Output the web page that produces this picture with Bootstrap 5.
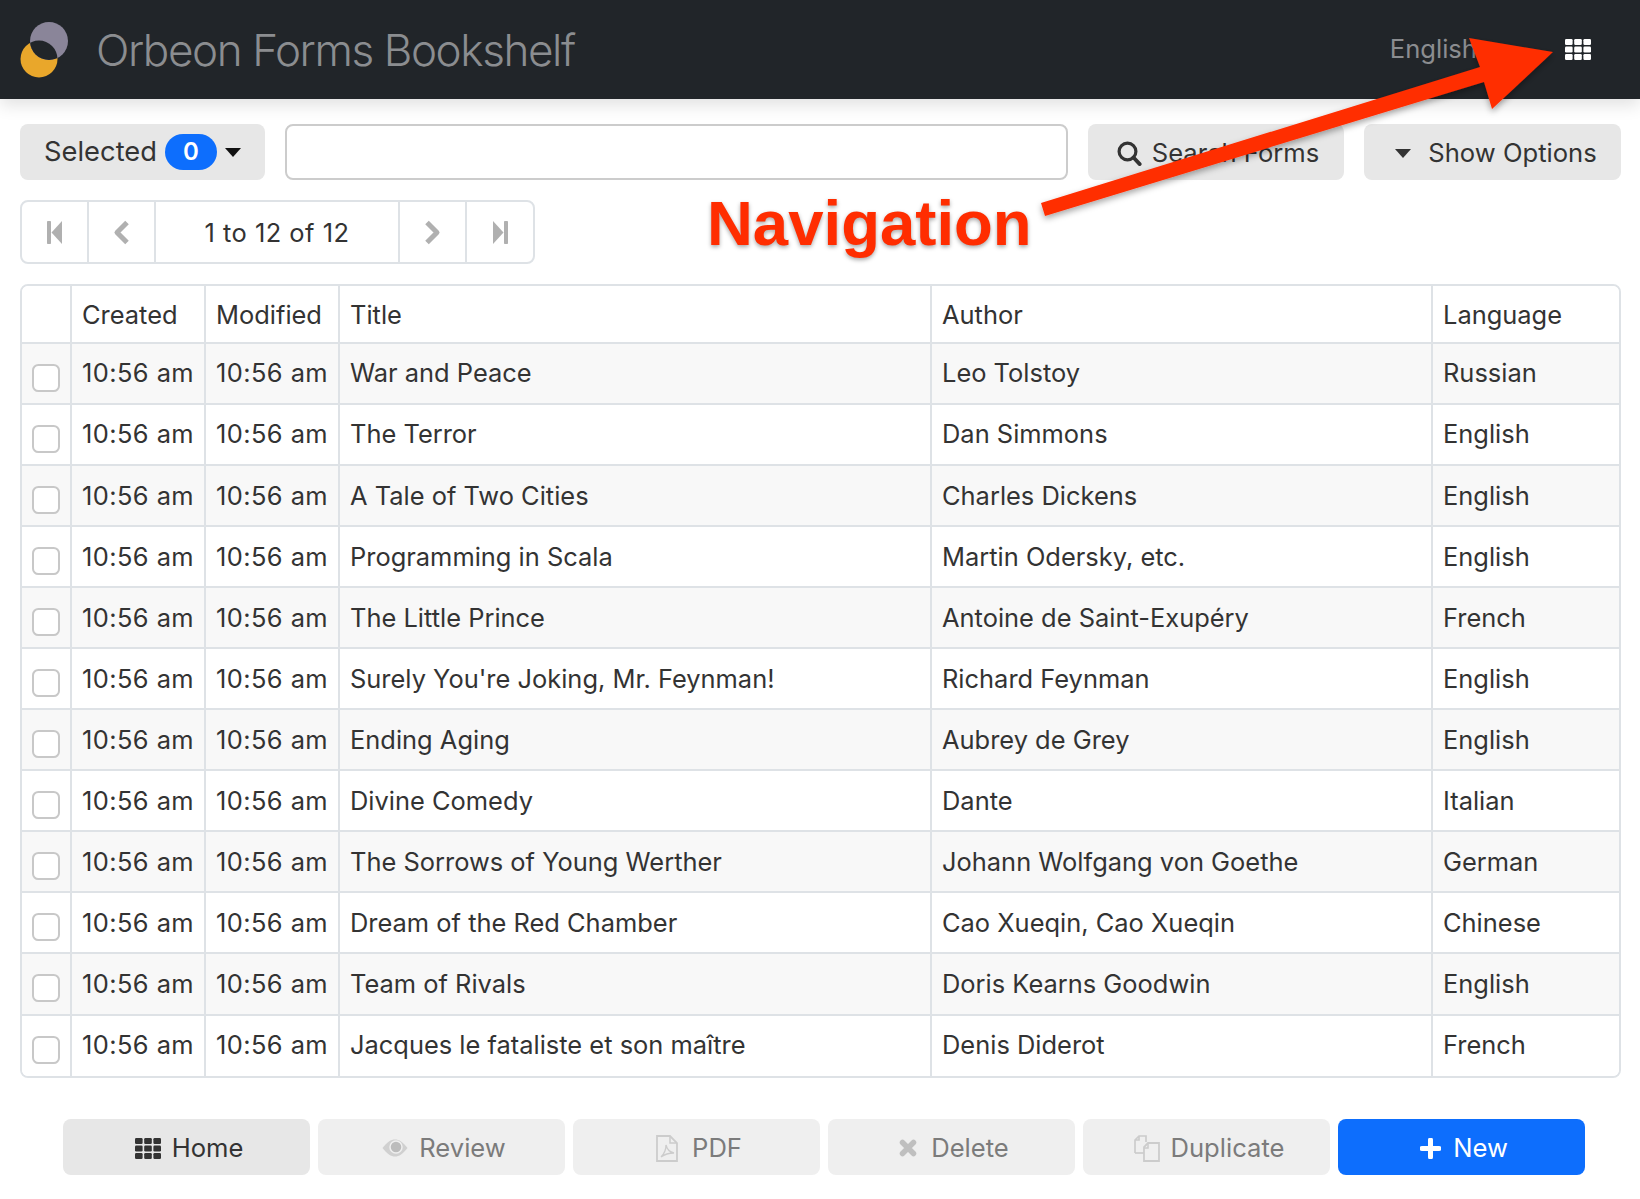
<!DOCTYPE html>
<html lang="en">
<head>
<meta charset="utf-8">
<title>Orbeon Forms Bookshelf</title>
<link href="https://cdn.jsdelivr.net/npm/bootstrap@5.3.0/dist/css/bootstrap.min.css" rel="stylesheet">
<style>
html,body{height:100%;overflow:hidden}
body{font-family:Inter,"Liberation Sans",sans-serif;font-size:25.45px;color:#333;background:#fff;position:relative}
.top-bar{height:99px;padding:0 20px;box-shadow:0 6px 16px rgba(0,0,0,.12)}
.top-logo{width:50px;height:56px;flex:none}
.top-title{font-size:44px;font-weight:300;color:#8b8d90;letter-spacing:-1.4px;margin-left:26px;line-height:1}
.top-lang{font-size:25.6px;color:#8b8d90;font-weight:400}
.top-grid{margin-left:88px;margin-right:29px;display:block}
.page-body{padding:25px 19px 0 20px}
.bar-btn{height:56px;font-size:25.6px;background:#e7e7e7;border:0;color:#333;border-radius:8px;padding:0;display:flex;align-items:center;justify-content:center;flex:none}
.bar-btn:hover{background:#e7e7e7;color:#333}
.sel-btn{width:245px;gap:8px;font-size:27.3px;padding-top:1px}
.sel-count{background:#0d6efd;color:#fff;font-size:24px;font-weight:600;width:52px;height:36px;line-height:36px;padding:0;border-radius:18px;display:inline-block;text-align:center}
.caret-ic{display:block}
.search-box{flex:1;height:56px;border:2px solid #ccc;border-radius:8px;margin:0 20px}
.srch-btn{width:256px;gap:10px;padding:3px 0 0 4px}
.opt-btn{width:257px;gap:17px;margin-left:20px;padding:3px 0 0 7px}
.pager-wrap{margin:20px 0 20px;width:515px;height:64px;border:2px solid #dee2e6;border-radius:8px;display:flex;align-items:stretch;background:#fff}
.pager-cell{display:flex;align-items:center;justify-content:center;width:67px;border-right:2px solid #dee2e6;flex:none}
.pager-text{width:244px;color:#333;font-size:25.45px;padding-top:2px;letter-spacing:.48px}
.pager-cell:last-child{border-right:0;flex:1}
.book-frame{border:2px solid #dee2e6;border-radius:8px;overflow:hidden;width:1601px}
.book-table{table-layout:fixed;width:1597px;border-collapse:separate;border-spacing:0;margin:0;font-size:25.45px}
.book-table.table>:not(caption)>*>*{border-width:0 2px 2px 0;border-style:solid;border-color:#dee2e6;padding:0 10px;vertical-align:middle;color:#333;box-shadow:none;font-weight:400;white-space:nowrap;overflow:hidden;background:#fff}
.book-table.table>thead>tr>*{height:58px;padding-top:2px}
.book-table.table>tbody>tr>*{height:61.05px}
.book-table.table>tbody>tr:nth-child(odd)>*{background:#f8f8f8}
.book-table.table>:not(caption)>*>*:last-child{border-right:0}
.book-table.table>tbody>tr:last-child>*{border-bottom:0;height:60px}
.book-table tbody td:nth-child(2),.book-table tbody td:nth-child(3){letter-spacing:.42px}
.c-check{width:50px}.c-time{width:134px}.c-title{width:592px}.c-author{width:501px}
.row-check{width:28px;height:28px;margin:9px 0 0 0;border:2px solid #c8c8c8;border-radius:6px;display:block}
.foot-row{padding:41px 36px 0 43px;gap:8px;justify-content:flex-start}
.foot-btn{width:247px;gap:11px;padding:3px 0 0 5px}
.foot-wide{gap:14px}
.foot-off{background:#efefef;color:#7b7b7b}
.foot-off:hover{background:#efefef;color:#7b7b7b}
.foot-new{background:#0d6efd;color:#fff;gap:12px}
.foot-new:hover{background:#0d6efd;color:#fff}
.note-arrow{position:absolute;left:0;top:0;pointer-events:none}
.note-label{position:absolute;left:707px;top:187px;font-family:"Liberation Sans",Arial,sans-serif;font-weight:700;font-size:63.5px;line-height:72px;color:#ff2d00;text-shadow:0 2px 4px rgba(0,0,0,.35);white-space:nowrap}
</style>
</head>
<body>
<nav class="navbar navbar-dark bg-dark top-bar d-flex align-items-center flex-nowrap">
  <div class="d-flex align-items-center">
    <svg class="top-logo" viewBox="0 0 50 56" aria-hidden="true">
      <defs><clipPath id="lens"><circle cx="29" cy="19" r="19"/></clipPath></defs>
      <circle cx="19" cy="37" r="18.5" fill="#e9a72b"/>
      <circle cx="29" cy="19" r="19" fill="#8a8599"/>
      <circle cx="19" cy="37" r="18.5" fill="#212529" clip-path="url(#lens)"/>
    </svg>
    <span class="top-title">Orbeon Forms Bookshelf</span>
  </div>
  <div class="d-flex align-items-center">
    <span class="top-lang">English</span>
    <svg class="top-grid" width="26" height="21" viewBox="0 0 26 21" fill="#fff" aria-hidden="true">
      <rect x="0" y="0" width="7.6" height="6" rx="1.2"/><rect x="9.2" y="0" width="7.6" height="6" rx="1.2"/><rect x="18.4" y="0" width="7.6" height="6" rx="1.2"/>
      <rect x="0" y="7.5" width="7.6" height="6" rx="1.2"/><rect x="9.2" y="7.5" width="7.6" height="6" rx="1.2"/><rect x="18.4" y="7.5" width="7.6" height="6" rx="1.2"/>
      <rect x="0" y="15" width="7.6" height="6" rx="1.2"/><rect x="9.2" y="15" width="7.6" height="6" rx="1.2"/><rect x="18.4" y="15" width="7.6" height="6" rx="1.2"/>
    </svg>
  </div>
</nav>

<div class="page-body">
  <div class="d-flex align-items-center">
    <button type="button" class="btn bar-btn sel-btn">Selected <span class="badge sel-count">0</span>
      <svg class="caret-ic" width="16" height="9" viewBox="0 0 16 9" aria-hidden="true"><path d="M0 0h16L8 9z" fill="#111"/></svg>
    </button>
    <input type="text" class="form-control search-box" aria-label="Search">
    <button type="button" class="btn bar-btn srch-btn">
      <svg width="25" height="25" viewBox="0 0 25 25" aria-hidden="true"><circle cx="10.5" cy="10.5" r="8.4" fill="none" stroke="#333" stroke-width="3.2"/><path d="M16.5 16.5l6.2 6.6" stroke="#333" stroke-width="3.8" stroke-linecap="round"/></svg>
      Search Forms</button>
    <button type="button" class="btn bar-btn opt-btn">
      <svg width="16" height="9" viewBox="0 0 16 9" aria-hidden="true"><path d="M0 0h16L8 9z" fill="#333"/></svg>
      Show Options</button>
  </div>

  <div class="pager-wrap">
    <div class="pager-cell"><svg width="16" height="23" viewBox="0 0 16 23" fill="#b0b0b0" aria-hidden="true"><rect x="0" y="0" width="4" height="23" rx=".8"/><path d="M15 0v23L4.5 11.5z"/></svg></div>
    <div class="pager-cell"><svg width="17" height="25" viewBox="0 0 17 25" aria-hidden="true"><path d="M14 2.5L4 12.5l10 10" fill="none" stroke="#b0b0b0" stroke-width="5" stroke-linejoin="round"/></svg></div>
    <div class="pager-cell pager-text">1 to 12 of 12</div>
    <div class="pager-cell"><svg width="17" height="25" viewBox="0 0 17 25" aria-hidden="true"><path d="M3 2.5l10 10-10 10" fill="none" stroke="#b0b0b0" stroke-width="5" stroke-linejoin="round"/></svg></div>
    <div class="pager-cell"><svg width="16" height="23" viewBox="0 0 16 23" fill="#b0b0b0" aria-hidden="true"><rect x="12" y="0" width="4" height="23" rx=".8"/><path d="M1 0v23l10.5-11.5z"/></svg></div>
  </div>

  <div class="book-frame">
    <table class="table book-table">
      <thead><tr><th class="c-check"></th><th class="c-time">Created</th><th class="c-time">Modified</th><th class="c-title">Title</th><th class="c-author">Author</th><th>Language</th></tr></thead>
      <tbody>
        <tr><td><input class="form-check-input row-check" type="checkbox" aria-label="Select"></td><td>10:56 am</td><td>10:56 am</td><td>War and Peace</td><td>Leo Tolstoy</td><td>Russian</td></tr>
        <tr><td><input class="form-check-input row-check" type="checkbox" aria-label="Select"></td><td>10:56 am</td><td>10:56 am</td><td>The Terror</td><td>Dan Simmons</td><td>English</td></tr>
        <tr><td><input class="form-check-input row-check" type="checkbox" aria-label="Select"></td><td>10:56 am</td><td>10:56 am</td><td>A Tale of Two Cities</td><td>Charles Dickens</td><td>English</td></tr>
        <tr><td><input class="form-check-input row-check" type="checkbox" aria-label="Select"></td><td>10:56 am</td><td>10:56 am</td><td>Programming in Scala</td><td>Martin Odersky, etc.</td><td>English</td></tr>
        <tr><td><input class="form-check-input row-check" type="checkbox" aria-label="Select"></td><td>10:56 am</td><td>10:56 am</td><td>The Little Prince</td><td>Antoine de Saint-Exupéry</td><td>French</td></tr>
        <tr><td><input class="form-check-input row-check" type="checkbox" aria-label="Select"></td><td>10:56 am</td><td>10:56 am</td><td>Surely You're Joking, Mr. Feynman!</td><td>Richard Feynman</td><td>English</td></tr>
        <tr><td><input class="form-check-input row-check" type="checkbox" aria-label="Select"></td><td>10:56 am</td><td>10:56 am</td><td>Ending Aging</td><td>Aubrey de Grey</td><td>English</td></tr>
        <tr><td><input class="form-check-input row-check" type="checkbox" aria-label="Select"></td><td>10:56 am</td><td>10:56 am</td><td>Divine Comedy</td><td>Dante</td><td>Italian</td></tr>
        <tr><td><input class="form-check-input row-check" type="checkbox" aria-label="Select"></td><td>10:56 am</td><td>10:56 am</td><td>The Sorrows of Young Werther</td><td>Johann Wolfgang von Goethe</td><td>German</td></tr>
        <tr><td><input class="form-check-input row-check" type="checkbox" aria-label="Select"></td><td>10:56 am</td><td>10:56 am</td><td>Dream of the Red Chamber</td><td>Cao Xueqin, Cao Xueqin</td><td>Chinese</td></tr>
        <tr><td><input class="form-check-input row-check" type="checkbox" aria-label="Select"></td><td>10:56 am</td><td>10:56 am</td><td>Team of Rivals</td><td>Doris Kearns Goodwin</td><td>English</td></tr>
        <tr><td><input class="form-check-input row-check" type="checkbox" aria-label="Select"></td><td>10:56 am</td><td>10:56 am</td><td>Jacques le fataliste et son maître</td><td>Denis Diderot</td><td>French</td></tr>
      </tbody>
    </table>
  </div>

  <div class="d-flex foot-row">
    <button type="button" class="btn bar-btn foot-btn">
      <svg width="26" height="21" viewBox="0 0 26 21" fill="#333" aria-hidden="true"><rect x="0" y="0" width="7.6" height="6" rx="1.2"/><rect x="9.2" y="0" width="7.6" height="6" rx="1.2"/><rect x="18.4" y="0" width="7.6" height="6" rx="1.2"/><rect x="0" y="7.5" width="7.6" height="6" rx="1.2"/><rect x="9.2" y="7.5" width="7.6" height="6" rx="1.2"/><rect x="18.4" y="7.5" width="7.6" height="6" rx="1.2"/><rect x="0" y="15" width="7.6" height="6" rx="1.2"/><rect x="9.2" y="15" width="7.6" height="6" rx="1.2"/><rect x="18.4" y="15" width="7.6" height="6" rx="1.2"/></svg>
      Home</button>
    <button type="button" class="btn bar-btn foot-btn foot-off">
      <svg width="26" height="20" viewBox="0 0 26 20" aria-hidden="true"><path d="M.5 10C5 4 9 1.500 13 1.500S21 4 25.500 10c-4.500 6-8.500 8.500-12.500 8.500S5 16 .5 10z" fill="#d0d0d0"/><circle cx="14" cy="9" r="6" fill="#bcbcbc" stroke="#efefef" stroke-width="1.500"/></svg>
      Review</button>
    <button type="button" class="btn bar-btn foot-btn foot-off foot-wide">
      <svg width="22" height="27" viewBox="0 0 22 27" aria-hidden="true"><path d="M1 1h13l7 7v18H1z" fill="none" stroke="#ccc" stroke-width="1.800"/><path d="M14 1v7h7" fill="none" stroke="#ccc" stroke-width="1.500"/><path d="M5 22c3-3 5-7 5-12 1 4 3 7 8 8-4 0-9 1-13 4z" fill="none" stroke="#ccc" stroke-width="1.300"/></svg>
      PDF</button>
    <button type="button" class="btn bar-btn foot-btn foot-off foot-wide">
      <svg width="18" height="18" viewBox="0 0 18 18" aria-hidden="true"><path d="M3.500 3.500l11 11M14.500 3.500l-11 11" stroke="#bfbfbf" stroke-width="5.500" stroke-linecap="round"/></svg>
      Delete</button>
    <button type="button" class="btn bar-btn foot-btn foot-off">
      <svg width="26" height="27" viewBox="0 0 26 27" aria-hidden="true"><path d="M1 18V5l4-4h7v6M5 1v4H1" fill="none" stroke="#ccc" stroke-width="1.700"/><path d="M1 18h9" stroke="#ccc" stroke-width="1.700"/><path d="M10 26V12l4-4h11v18z" fill="#efefef" stroke="#ccc" stroke-width="1.800"/><path d="M14 8v5h-4" fill="none" stroke="#ccc" stroke-width="1.500"/></svg>
      Duplicate</button>
    <button type="button" class="btn bar-btn foot-btn foot-new">
      <svg width="21" height="21" viewBox="0 0 21 21" aria-hidden="true"><path d="M10.500 2v17M2 10.500h17" stroke="#fff" stroke-width="5" stroke-linecap="round"/></svg>
      New</button>
  </div>
</div>

<svg class="note-arrow" width="1640" height="260" viewBox="0 0 1640 260" aria-hidden="true">
  <defs><filter id="soft" x="-5%" y="-10%" width="110%" height="125%"><feDropShadow dx="0" dy="3" stdDeviation="3" flood-color="#000" flood-opacity=".35"/></filter></defs>
  <path d="M1041 203L1480 67L1469 38L1553 52L1492 109L1484 82L1045 216z" fill="#ff2d00" filter="url(#soft)"/>
</svg>
<div class="note-label">Navigation</div>
<script src="https://cdn.jsdelivr.net/npm/bootstrap@5.3.0/dist/js/bootstrap.bundle.min.js"></script>
</body>
</html>
